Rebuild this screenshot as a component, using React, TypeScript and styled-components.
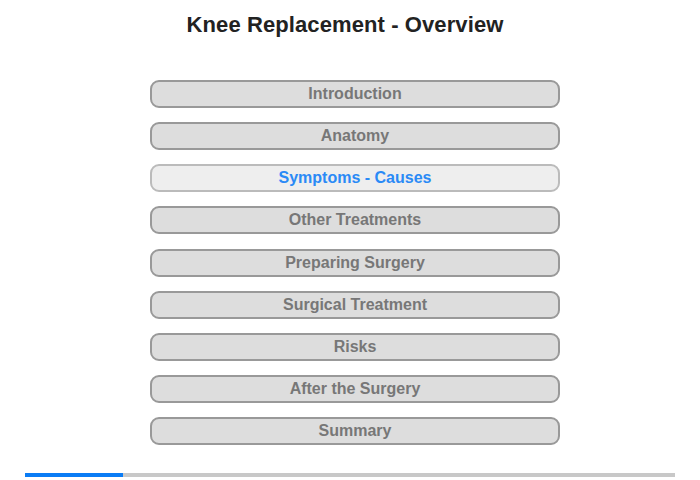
import React from "react";
import styled, { createGlobalStyle } from "styled-components";

const Global = createGlobalStyle`
  html, body { margin: 0; padding: 0; background: #fff; }
  body { font-family: "Liberation Sans", Arial, sans-serif; }
`;

const Page = styled.div`
  width: 700px;
  height: 480px;
  display: flex;
  flex-direction: column;
  align-items: center;
  box-sizing: border-box;
  padding-top: 13px;
  overflow: hidden;
`;

const Title = styled.h1`
  margin: 0 10px 0 0;
  font-size: 22px;
  font-weight: bold;
  color: #222;
  line-height: 24px;
  height: 24px;
  white-space: nowrap;
  letter-spacing: 0.1px;
`;

const Menu = styled.nav`
  margin: 43px 0 0 10px;
  display: flex;
  flex-direction: column;
  gap: 14.15px;
  width: 410px;
`;

const Item = styled.div<{ $active?: boolean }>`
  box-sizing: border-box;
  height: 28px;
  border: 2px solid ${(p) => (p.$active ? "#bbb" : "#999")};
  border-radius: 9px;
  background: ${(p) => (p.$active ? "#eee" : "#ddd")};
  color: ${(p) => (p.$active ? "#2a8af6" : "#777")};
  font-size: 16px;
  font-weight: bold;
  display: flex;
  align-items: center;
  justify-content: center;
  line-height: 1;
`;

const Progress = styled.div`
  margin-top: 28px;
  width: 650px;
  height: 4px;
  background: #c8c8c8;
  display: flex;
`;

const Fill = styled.div`
  height: 100%;
  background: #0a7cf5;
`;

const items = [
  "Introduction",
  "Anatomy",
  "Symptoms - Causes",
  "Other Treatments",
  "Preparing Surgery",
  "Surgical Treatment",
  "Risks",
  "After the Surgery",
  "Summary",
];

export default function App() {
  return (
    <>
      <Global />
      <Page>
        <Title>Knee Replacement - Overview</Title>
        <Menu>
          {items.map((t, i) => (
            <Item key={t} $active={i === 2}>
              {t}
            </Item>
          ))}
        </Menu>
        <Progress>
          <Fill style={{ width: `${(98 / 650) * 100}%` }} />
        </Progress>
      </Page>
    </>
  );
}
